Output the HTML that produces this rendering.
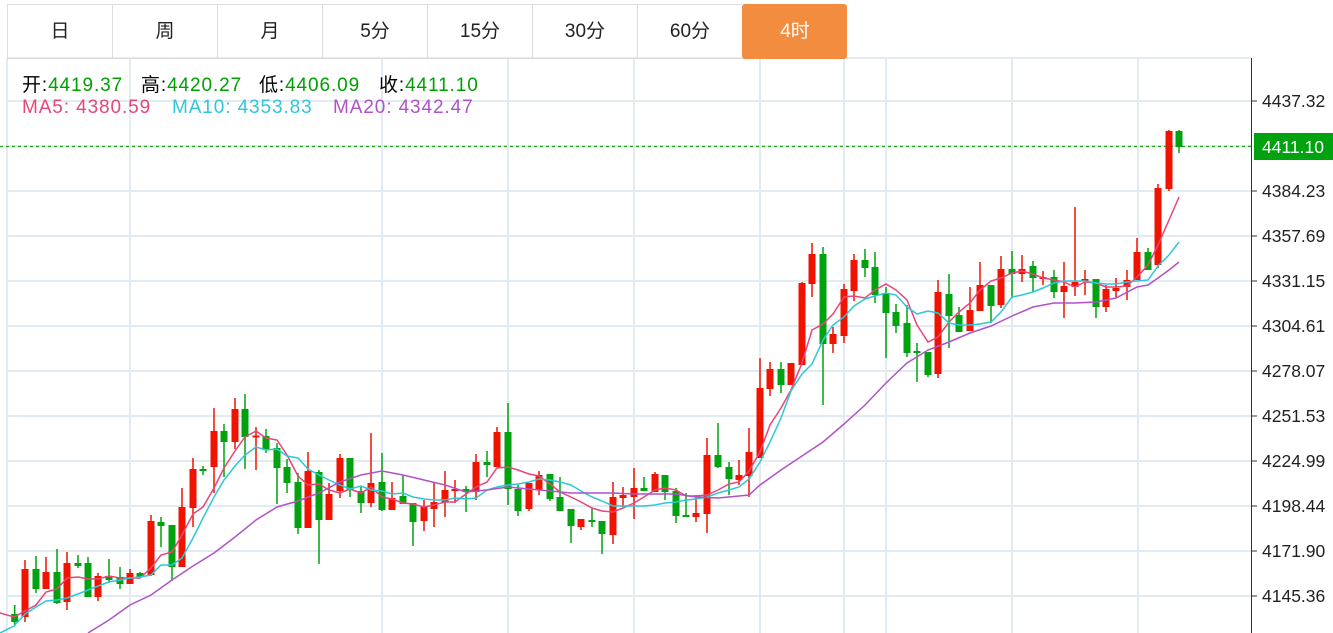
<!DOCTYPE html>
<html><head><meta charset="utf-8"><style>
body{margin:0;width:1333px;height:633px;overflow:hidden;background:#fff;font-family:"Liberation Sans","Noto Sans CJK SC",sans-serif}
.tabs{position:absolute;left:7px;top:4px;height:54px;display:flex}
.tabs div{width:104px;height:53px;border:1px solid #ddd;border-right:none;line-height:53px;text-align:center;font-size:19px;color:#222}
.tabs div.a{background:#f28c3e;color:#fff;border-color:#f28c3e;border-radius:3px}
.i{position:absolute;font-size:19px;letter-spacing:0.9px;white-space:pre}
.g{color:#00a000}
</style></head><body>
<svg width="1333" height="633" style="position:absolute;left:0;top:0">
<g stroke="#e3ebf2" stroke-width="2" fill="none">
<path d="M7 58V633M130 58V633M382 58V633M508 58V633M634 58V633M760 58V633M844 58V633M886 58V633M1012 58V633M1138 58V633"/>
<path d="M7 58H1251M7 101H1251M7 146H1251M7 191H1251M7 236H1251M7 281H1251M7 326H1251M7 371H1251M7 416H1251M7 461H1251M7 506H1251M7 551H1251M7 596H1251"/>
</g>
<line x1="0" y1="146.5" x2="1251" y2="146.5" stroke="#1aa31a" stroke-width="1.3" stroke-dasharray="3,3"/>
<path stroke="#f01300" stroke-width="1.5" fill="none" d="M25 560V622M46 557V589M67 552V610M98 573V601M130 569V584M151 515V576M182 488V567M193 458V527M214 408V493M235 398V449M256 427V470M308 452V528M329 483V520M340 454V498M371 433V507M392 482V510M424 500V531M434 482V527M445 471V517M455 480V503M476 454V500M497 427V467M529 483V511M539 471V495M581 519V530M613 482V544M623 487V507M634 468V519M655 472V492M696 495V522M707 438V533M739 460V485M749 428V497M760 358V458M770 362V396M791 363V385M802 282V365M812 243V297M833 327V353M844 284V343M854 254V301M938 280V378M970 287V331M980 262V311M1001 256V308M1022 255V282M1043 271V285M1064 262V318M1075 207V296M1085 270V295M1106 285V312M1116 278V297M1127 270V300M1137 238V280M1158 184V268M1169 130V191"/>
<path stroke="#00a30f" stroke-width="1.5" fill="none" d="M14.7 605V626M36 556V593M57 549V604M78 555V568M88 557V597M109 559V582M120 567V589M140 572V578M161 517V547M172 525V581M203 466V475M224 424V477M245 394V469M266 429V453M277 443V504M287 459V493M298 473V534M319 470V564M350 458V497M361 487V513M382 453V511M403 475V504M413 503V546M466 486V512M487 451V477M508 403V505M518 485V516M550 474V501M560 477V511M571 509V543M592 508V527M602 521V554M644 477V491M665 475V500M676 488V523M686 493V517M718 423V468M729 462V495M781 362V393M823 247V405M865 249V277M875 252V303M886 287V358M896 304V333M907 305V357M917 343V382M928 352V377M949 274V348M959 307V332M991 285V323M1012 251V298M1033 261V292M1054 270V298M1096 279V318M1148 248V270M1179 130V153"/>
<g fill="#f01300">
<rect x="21.5" y="569" width="7" height="48"/><rect x="42.5" y="572" width="7" height="17"/><rect x="63.5" y="563" width="7" height="39"/><rect x="94.5" y="576" width="7" height="21"/><rect x="126.5" y="573" width="7" height="11"/><rect x="147.5" y="521" width="7" height="54"/><rect x="178.5" y="507" width="7" height="60"/><rect x="189.5" y="469" width="7" height="39"/><rect x="210.5" y="431" width="7" height="36"/><rect x="231.5" y="409" width="7" height="33"/><rect x="252.5" y="435.5" width="7" height="2"/><rect x="304.5" y="471" width="7" height="57"/><rect x="325.5" y="494" width="7" height="26"/><rect x="336.5" y="458" width="7" height="33"/><rect x="367.5" y="483" width="7" height="20"/><rect x="388.5" y="498" width="7" height="12"/><rect x="420.5" y="507" width="7" height="14"/><rect x="430.5" y="502" width="7" height="7"/><rect x="441.5" y="490" width="7" height="12"/><rect x="451.5" y="489" width="7" height="2"/><rect x="472.5" y="462" width="7" height="30"/><rect x="493.5" y="432" width="7" height="35"/><rect x="525.5" y="483" width="7" height="26"/><rect x="535.5" y="475" width="7" height="15"/><rect x="577.5" y="519" width="7" height="8"/><rect x="609.5" y="497" width="7" height="38"/><rect x="619.5" y="495" width="7" height="3"/><rect x="630.5" y="488" width="7" height="9"/><rect x="651.5" y="474" width="7" height="18"/><rect x="692.5" y="513" width="7" height="4"/><rect x="703.5" y="455" width="7" height="59"/><rect x="735.5" y="475" width="7" height="5"/><rect x="745.5" y="452" width="7" height="24"/><rect x="756.5" y="388" width="7" height="70"/><rect x="766.5" y="369" width="7" height="20"/><rect x="787.5" y="363" width="7" height="22"/><rect x="798.5" y="283" width="7" height="82"/><rect x="808.5" y="254" width="7" height="30"/><rect x="829.5" y="334" width="7" height="10"/><rect x="840.5" y="289" width="7" height="47"/><rect x="850.5" y="260" width="7" height="31"/><rect x="934.5" y="292" width="7" height="82"/><rect x="966.5" y="310" width="7" height="21"/><rect x="976.5" y="285" width="7" height="26"/><rect x="997.5" y="269" width="7" height="36"/><rect x="1018.5" y="269" width="7" height="5"/><rect x="1039.5" y="277" width="7" height="2"/><rect x="1060.5" y="286" width="7" height="6"/><rect x="1071.5" y="282" width="7" height="5"/><rect x="1081.5" y="279" width="7" height="2"/><rect x="1102.5" y="289" width="7" height="18"/><rect x="1112.5" y="288" width="7" height="3"/><rect x="1123.5" y="280" width="7" height="7"/><rect x="1133.5" y="252" width="7" height="28"/><rect x="1154.5" y="188" width="7" height="77"/><rect x="1165.5" y="131" width="7" height="58"/>
</g>
<g fill="#00a30f">
<rect x="11.2" y="614" width="7" height="8"/><rect x="32.5" y="569" width="7" height="20"/><rect x="53.5" y="572" width="7" height="31"/><rect x="74.5" y="563" width="7" height="3"/><rect x="84.5" y="563" width="7" height="34"/><rect x="105.5" y="576" width="7" height="4"/><rect x="116.5" y="577" width="7" height="7"/><rect x="136.5" y="573" width="7" height="4"/><rect x="157.5" y="522" width="7" height="4"/><rect x="168.5" y="525" width="7" height="42"/><rect x="199.5" y="469" width="7" height="2"/><rect x="220.5" y="431" width="7" height="11"/><rect x="241.5" y="409" width="7" height="28"/><rect x="262.5" y="436" width="7" height="14"/><rect x="273.5" y="448" width="7" height="20"/><rect x="283.5" y="467" width="7" height="16"/><rect x="294.5" y="482" width="7" height="46"/><rect x="315.5" y="472" width="7" height="48"/><rect x="346.5" y="458" width="7" height="32"/><rect x="357.5" y="491" width="7" height="12"/><rect x="378.5" y="482" width="7" height="28"/><rect x="399.5" y="496" width="7" height="8"/><rect x="409.5" y="503" width="7" height="19"/><rect x="462.5" y="489" width="7" height="3"/><rect x="483.5" y="462" width="7" height="3"/><rect x="504.5" y="432" width="7" height="57"/><rect x="514.5" y="489" width="7" height="22"/><rect x="546.5" y="474" width="7" height="25"/><rect x="556.5" y="497" width="7" height="14"/><rect x="567.5" y="509" width="7" height="17"/><rect x="588.5" y="520" width="7" height="2"/><rect x="598.5" y="521" width="7" height="13"/><rect x="640.5" y="488" width="7" height="3"/><rect x="661.5" y="475" width="7" height="17"/><rect x="672.5" y="491" width="7" height="25"/><rect x="682.5" y="515" width="7" height="2"/><rect x="714.5" y="455" width="7" height="12"/><rect x="725.5" y="467" width="7" height="12"/><rect x="777.5" y="369" width="7" height="16"/><rect x="819.5" y="254" width="7" height="90"/><rect x="861.5" y="260" width="7" height="8"/><rect x="871.5" y="267" width="7" height="28"/><rect x="882.5" y="293" width="7" height="20"/><rect x="892.5" y="312" width="7" height="14"/><rect x="903.5" y="323" width="7" height="30"/><rect x="913.5" y="351" width="7" height="2"/><rect x="924.5" y="352" width="7" height="23"/><rect x="945.5" y="294" width="7" height="22"/><rect x="955.5" y="315" width="7" height="17"/><rect x="987.5" y="285" width="7" height="21"/><rect x="1008.5" y="269" width="7" height="5"/><rect x="1029.5" y="266" width="7" height="12"/><rect x="1050.5" y="277" width="7" height="15"/><rect x="1092.5" y="279" width="7" height="28"/><rect x="1144.5" y="252" width="7" height="18"/><rect x="1175.5" y="131" width="7" height="16"/>
</g>
<g fill="none" stroke-width="1.5">
<polyline stroke="#e8457a" points="0,613 14,617 25,611 36,605 46,592 57,589 67,578 78,577 88,579 98,579 109,576 120,578 130,578 140,578 151,568 161,555 172,552 182,535 193,514 203,507 214,488 224,468 235,451 245,437 256,431 266,438 277,440 287,455 298,476 308,485 319,484 329,490 340,493 350,489 361,493 371,487 382,497 392,499 403,503 413,504 424,507 434,505 445,502 455,502 466,494 476,487 487,482 497,468 508,467 518,470 529,474 539,476 550,484 560,492 571,497 581,502 592,508 602,511 613,512 623,508 634,503 644,497 655,490 665,488 676,490 686,496 696,496 707,495 718,490 729,484 739,482 749,471 760,452 770,425 781,408 791,390 802,363 812,330 823,324 833,314 844,297 854,296 865,298 875,290 886,284 896,290 907,300 917,325 928,342 938,337 949,322 959,312 970,303 980,290 991,281 1001,278 1012,273 1022,271 1033,274 1043,278 1054,280 1064,282 1075,287 1085,282 1096,283 1106,287 1116,287 1127,286 1137,277 1148,265 1158,245 1169,220 1179,197"/>
<polyline stroke="#2ec7d9" points="0,633 14,626 25,614 36,607 46,601 57,600 67,598 78,594 88,590 98,586 109,582 120,580 130,578 140,577 151,575 161,565 172,565 182,558 193,538 203,518 214,497 224,480 235,466 245,455 256,447 266,450 277,449 287,456 298,458 308,469 319,475 329,480 340,485 350,489 361,486 371,490 382,491 392,494 403,493 413,497 424,499 434,500 445,500 455,498 466,499 476,498 487,490 497,487 508,485 518,484 529,482 539,479 550,480 560,482 571,485 581,491 592,497 602,501 613,506 623,506 634,506 644,506 655,505 665,503 676,502 686,500 696,499 707,497 718,493 729,490 739,487 749,479 760,462 770,442 781,418 791,391 802,374 812,364 823,340 833,325 844,317 854,306 865,299 875,296 886,293 896,295 907,307 917,314 928,311 938,313 949,323 959,325 970,325 980,324 991,322 1001,312 1012,297 1022,295 1033,292 1043,288 1054,283 1064,281 1075,281 1085,281 1096,283 1106,284 1116,284 1127,282 1137,281 1148,280 1158,266 1169,255 1179,242"/>
<polyline stroke="#b052c8" points="88,633 109,620 130,605 151,595 172,580 193,566 214,553 235,537 256,520 277,507 298,501 319,493 340,482 361,475 382,471 403,475 424,480 445,485 466,492 487,490 508,487 529,489 550,491 571,493 592,493 613,493 634,494 655,494 676,494 696,497 718,498 739,496 749,495 760,485 781,470 802,456 823,442 844,424 865,405 886,383 907,363 928,350 949,342 970,333 991,326 1012,316 1033,307 1054,303 1075,303 1096,302 1116,298 1137,287 1148,285 1158,278 1169,270 1179,262"/>
</g>
<line x1="1251.5" y1="58" x2="1251.5" y2="633" stroke="#333" stroke-width="1"/>
<path stroke="#333" d="M1251 101H1257M1251 191H1257M1251 236H1257M1251 281H1257M1251 326H1257M1251 371H1257M1251 416H1257M1251 461H1257M1251 506H1257M1251 551H1257M1251 596H1257"/>
<g font-size="17.5" fill="#222" font-family="Liberation Sans,sans-serif">
<text x="1262" y="107">4437.32</text><text x="1262" y="197">4384.23</text><text x="1262" y="242">4357.69</text><text x="1262" y="287">4331.15</text><text x="1262" y="332">4304.61</text><text x="1262" y="377">4278.07</text><text x="1262" y="422">4251.53</text><text x="1262" y="467">4224.99</text><text x="1262" y="512">4198.44</text><text x="1262" y="557">4171.90</text><text x="1262" y="602">4145.36</text>
</g>
<rect x="1254" y="133" width="79" height="27" fill="#00a30f"/>
<text x="1262" y="153" font-size="17.5" fill="#fff" font-family="Liberation Sans,sans-serif">4411.10</text>
</svg>
<div class="tabs"><div>日</div><div>周</div><div>月</div><div>5分</div><div>15分</div><div>30分</div><div>60分</div><div class="a">4时</div></div>
<div class="i" style="top:70px;left:22px">开:<span class="g">4419.37</span></div>
<div class="i" style="top:70px;left:141px">高:<span class="g">4420.27</span></div>
<div class="i" style="top:70px;left:259px">低:<span class="g">4406.09</span></div>
<div class="i" style="top:70px;left:379px">收:<span class="g">4411.10</span></div>
<div class="i" style="top:97px;left:22px;color:#e8457a">MA5: 4380.59</div>
<div class="i" style="top:97px;left:172px;color:#2ec7d9">MA10: 4353.83</div>
<div class="i" style="top:97px;left:333px;color:#b052c8">MA20: 4342.47</div>
</body></html>
